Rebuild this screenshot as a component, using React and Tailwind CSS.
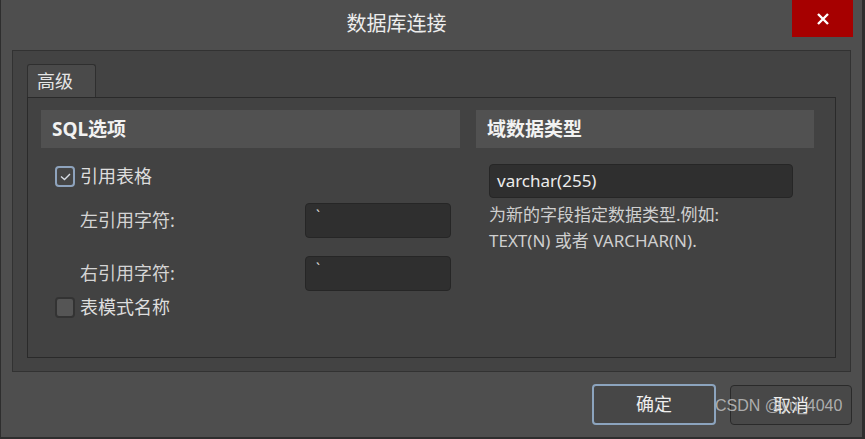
import React from "react"

const font = { fontFamily: '"Noto Sans", "Noto Sans CJK SC", sans-serif' }

const Check = ({ checked }) => (
  <span
    className={`flex items-center justify-center w-[20px] h-[21px] rounded-[4px] border-2 ${
      checked ? "border-[#8ea3bd] bg-[#454545]" : "border-[#333333] bg-[#555555]"
    }`}
  >
    {checked && (
      <svg width="11" height="8" viewBox="0 0 11 8" fill="none">
        <path d="M1 3.5 L4.5 6.5 L10 1" stroke="#d8dde4" strokeWidth="1.4" />
      </svg>
    )}
  </span>
)

const Field = ({ label }) => (
  <div className="flex items-center pl-[25px]">
    <span className="w-[225px] text-[18px] text-[#d4d4d4]">{label}</span>
    <div className="w-[146px] h-[35px] rounded-[4px] border border-[#262626] bg-[#2f2f2f] px-[10px] pt-[2px] text-[#e0e0e0] text-[14px] leading-[20px]">
      `
    </div>
  </div>
)

export default function App() {
  return (
    <div
      className="relative w-[865px] h-[439px] bg-[#4e4e4e] border-l border-r-[3px] border-b-2 border-[#2e2e2e] flex flex-col overflow-hidden"
      style={font}
    >
      {/* title bar */}
      <div className="h-[50px] shrink-0 flex items-start pr-[9px]">
        <div className="flex-1 h-[48px] flex items-center justify-center">
          <span className="text-[20px] text-[#ececec]">数据库连接</span>
        </div>
        <div className="w-[61px] h-[37px] bg-[#a60000] flex items-center justify-center">
          <svg width="12" height="12" viewBox="0 0 12 12">
            <path d="M1 1 L11 11 M11 1 L1 11" stroke="#ffffff" strokeWidth="2.4" />
          </svg>
        </div>
      </div>

      {/* main panel */}
      <div className="mx-[11px] h-[322px] bg-[#434343] border border-[#323232] pt-[13px] px-[14px] pb-[13px] flex flex-col">
        <div className="flex">
          <div className="w-[69px] h-[33px] bg-[#4a4a4a] border border-b-0 border-[#2f2f2f] rounded-t-[3px] px-[9px] flex items-center text-[18px] text-[#e6e6e6]">
            高级
          </div>
        </div>
        <div className="flex-1 bg-[#424242] border border-[#2a2a2a] pt-[12px] pl-[13px] pr-[21px] flex gap-[16px]">
          {/* left column */}
          <div className="w-[419px] flex flex-col">
            <div className="h-[38px] bg-[#515151] flex items-center px-[11px] text-[19px] font-bold text-[#f2f2f2]">
              SQL选项
            </div>
            <div className="pl-[14px] pt-[18px] flex flex-col">
              <label className="flex items-center gap-[5px] h-[21px] text-[18px] text-[#dedede]">
                <Check checked />
                引用表格
              </label>
              <div className="flex flex-col gap-[18px] mt-[16px]">
                <Field label="左引用字符:" />
                <Field label="右引用字符:" />
              </div>
              <label className="flex items-center gap-[5px] h-[21px] mt-[6px] text-[18px] text-[#dedede]">
                <Check />
                表模式名称
              </label>
            </div>
          </div>

          {/* right column */}
          <div className="flex-1 flex flex-col">
            <div className="h-[38px] bg-[#515151] flex items-center px-[11px] text-[19px] font-bold text-[#f2f2f2]">
              域数据类型
            </div>
            <div className="pl-[13px] pt-[16px] flex flex-col">
              <div className="w-[304px] h-[34px] rounded-[4px] border border-[#262626] bg-[#2f2f2f] px-[7px] flex items-center text-[17px] text-[#ececec]">
                varchar(255)
              </div>
              <p className="mt-[4px] text-[17px] leading-[26px] text-[#cfcfcf]">
                为新的字段指定数据类型.例如:
                <br />
                TEXT(N) 或者 VARCHAR(N).
              </p>
            </div>
          </div>
        </div>
      </div>

      {/* footer */}
      <div className="flex-1 flex justify-end items-start gap-[14px] pt-[12px] pr-[10px]">
        <button className="w-[124px] h-[41px] rounded-[4px] border-2 border-[#8ca4be] bg-[#474747] text-[18px] text-[#eeeeee]">
          确定
        </button>
        <button className="w-[122px] h-[40px] mt-[1px] rounded-[4px] border border-[#2a2a2a] bg-[#484848] text-[18px] text-[#eeeeee]">
          取消
        </button>
      </div>

      <span
        className="absolute left-[714px] top-[398px] text-[16px] text-[#c8c8c8]/80 leading-none"
        style={{ fontFamily: '"Liberation Sans", Arial, sans-serif' }}
      >
        CSDN @yu_4040
      </span>
    </div>
  )
}
